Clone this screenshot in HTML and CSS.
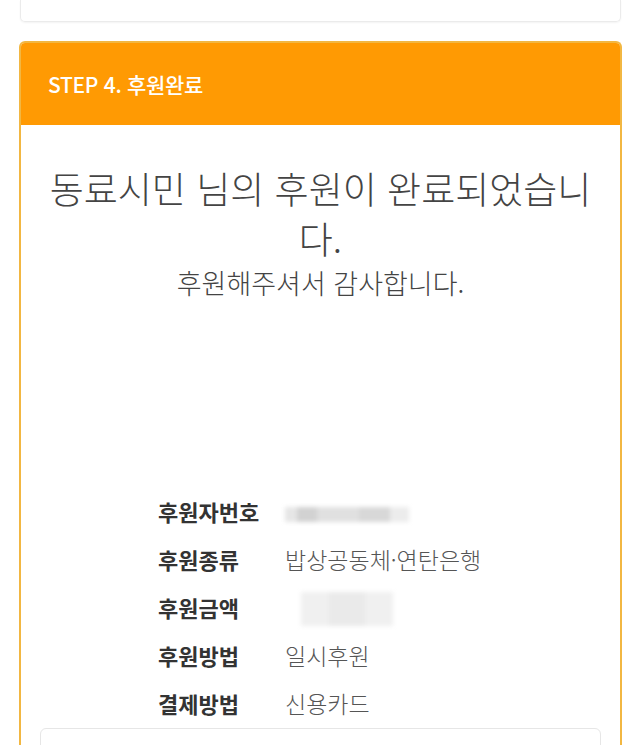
FILE: index.html
```html
<!DOCTYPE html>
<html lang="ko">
<head>
    <meta charset="UTF-8">
    <meta name="viewport" content="width=device-width, initial-scale=1.0">
    <title>후원완료</title>
    <link rel="stylesheet" href="styles.css">
</head>
<body>
    <div class="page">
        <div class="prev-card"></div>

        <div class="step-card">
            <div class="step-header">STEP 4. 후원완료</div>
            <div class="step-body">
                <h2 class="done-title">동료시민 님의 후원이 완료되었습니다.</h2>
                <p class="done-sub">후원해주셔서 감사합니다.</p>

                <div class="info">
                    <div class="info-label">후원자번호</div>
                    <div class="info-value"><span class="blur blur-no"></span></div>

                    <div class="info-label">후원종류</div>
                    <div class="info-value">밥상공동체·연탄은행</div>

                    <div class="info-label">후원금액</div>
                    <div class="info-value"><span class="blur blur-amount"></span></div>

                    <div class="info-label">후원방법</div>
                    <div class="info-value">일시후원</div>

                    <div class="info-label">결제방법</div>
                    <div class="info-value">신용카드</div>
                </div>

                <div class="next-box"></div>
            </div>
        </div>
    </div>
</body>
</html>
```

FILE: styles.css
```css
body {
    margin: 0;
    background: #fff;
    font-family: "Noto Sans CJK KR", "Noto Sans", sans-serif;
    color: #444;
    overflow: hidden;
}
.page {
    padding: 0 18px 0 19px;
}
.prev-card {
    height: 21px;
    border: 1px solid #ebebeb;
    border-top: none;
    border-radius: 0 0 5px 5px;
    box-shadow: 0 1px 2px rgba(0, 0, 0, 0.05);
    margin: 0 1px 19px 1px;
}
.step-card {
    border: 2px solid #f2b742;
    border-bottom: none;
    border-radius: 6px 6px 0 0;
    overflow: hidden;
}
.step-header {
    background: #ff9a03;
    color: #fff;
    height: 82px;
    line-height: 82px;
    padding-left: 27px;
    font-size: 21px;
    font-weight: 500;
    letter-spacing: -0.3px;
}
.step-body {
    background: #fff;
    padding: 38px 0 0;
    text-align: center;
}
.done-title {
    margin: 0 auto;
    width: 562px;
    font-size: 37px;
    font-weight: 300;
    line-height: 50px;
    color: #444;
}
.done-sub {
    margin: 3px 0 0;
    font-size: 27px;
    font-weight: 300;
    line-height: 34px;
    color: #444;
}
.info {
    display: grid;
    grid-template-columns: 127px auto;
    grid-auto-rows: 48px;
    align-items: center;
    margin-top: 187px;
    padding-left: 137px;
    text-align: left;
}
.info-label {
    font-size: 22px;
    font-weight: 700;
    color: #333;
}
.info-value {
    font-size: 23px;
    font-weight: 300;
    color: #555;
}
.blur {
    display: inline-block;
    vertical-align: middle;
    filter: blur(2px);
}
.blur-no {
    width: 124px;
    height: 15px;
    background: linear-gradient(90deg, #e6e6e6 0 10%, #d2d2d2 10% 26%, #e0e0e0 26% 60%, #d8d8d8 60% 85%, #ececec 85%);
}
.blur-amount {
    width: 92px;
    height: 34px;
    margin-left: 16px;
    background: linear-gradient(90deg, #f0f0f0 0 30%, #eaeaea 30% 70%, #f0f0f0 70%);
}
.next-box {
    margin: 1px 19px 0 19px;
    height: 40px;
    border: 1px solid #e6e6e6;
    border-radius: 6px;
}
```
